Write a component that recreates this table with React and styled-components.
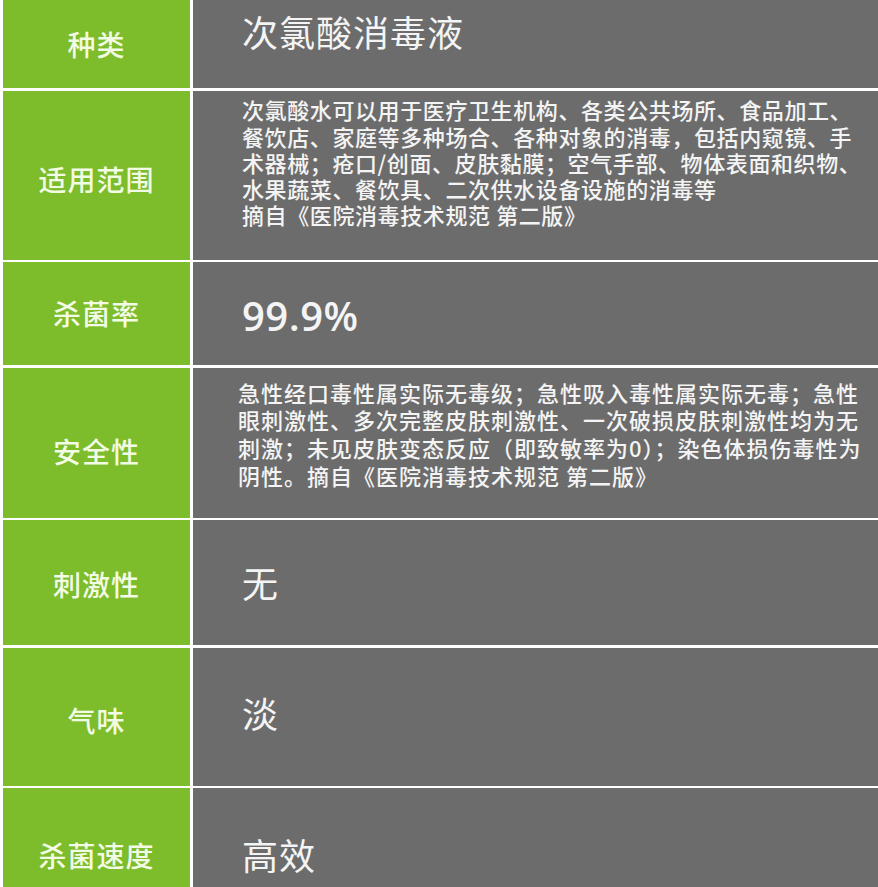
import React from "react";
import styled, { createGlobalStyle } from "styled-components";

const Global = createGlobalStyle`
  html, body {
    margin: 0;
    padding: 0;
    background: #ffffff;
    height: 887px;
    overflow: hidden;
  }
  body {
    font-family: "Noto Sans CJK SC", "Noto Sans", sans-serif;
  }
`;

const Table = styled.div`
  display: grid;
  grid-template-columns: 187px 1fr;
  column-gap: 3px;
  row-gap: 2.5px;
  padding-left: 3px;
`;

const shiftPad = (s) =>
  `padding-top: ${s > 0 ? s * 2 : 0}px; padding-bottom: ${s < 0 ? -s * 2 : 0}px;`;

const LabelCell = styled.div`
  box-sizing: border-box;
  height: ${(p) => p.$h}px;
  background: #7dbc2b;
  color: #f2fbe4;
  display: flex;
  align-items: center;
  justify-content: center;
  font-family: "Noto Sans CJK SC", sans-serif;
  font-size: 28px;
  font-weight: 500;
  line-height: 1;
  letter-spacing: 1px;
  ${(p) => shiftPad(p.$shift)}
`;

const ValueCell = styled.div`
  box-sizing: border-box;
  height: ${(p) => p.$h}px;
  background: #6c6c6c;
  color: #f4f4f4;
  display: flex;
  flex-direction: column;
  justify-content: center;
  align-items: flex-start;
  padding-left: ${(p) => p.$left}px;
  ${(p) => shiftPad(p.$shift)}
`;

const BigValue = styled.div`
  font-family: "Noto Sans CJK SC", sans-serif;
  font-size: 36px;
  font-weight: 400;
  line-height: 1;
  letter-spacing: 1px;
`;

const NumValue = styled.div`
  font-family: "Open Sans", "Noto Sans", sans-serif;
  font-size: 40px;
  font-weight: 600;
  line-height: 1;
  letter-spacing: 0.5px;
`;

const Paragraph = styled.div`
  font-family: "Noto Sans CJK SC", sans-serif;
  font-size: 22px;
  font-weight: 500;
  line-height: ${(p) => p.$pitch}px;
  letter-spacing: ${(p) => p.$spacing}px;
`;

const Line = styled.div`
  white-space: nowrap;
`;

const rows = [
  { label: "种类", h: 88, ls: -0.5, vs: -13, big: "次氯酸消毒液" },
  {
    label: "适用范围",
    h: 169,
    ls: 3.5,
    vs: -13,
    left: 49,
    spacing: 0.6,
    pitch: 26.3,
    lines: [
      "次氯酸水可以用于医疗卫生机构、各类公共场所、食品加工、",
      "餐饮店、家庭等多种场合、各种对象的消毒，包括内窥镜、手",
      "术器械；疮口/创面、皮肤黏膜；空气手部、物体表面和织物、",
      "水果蔬菜、餐饮具、二次供水设备设施的消毒等",
      "摘自《医院消毒技术规范 第二版》",
    ],
  },
  { label: "杀菌率", h: 103, ls: -0.5, vs: 2.5, num: "99.9%" },
  {
    label: "安全性",
    h: 150,
    ls: 8,
    vs: -8.5,
    left: 45,
    spacing: 1,
    pitch: 27.7,
    lines: [
      "急性经口毒性属实际无毒级；急性吸入毒性属实际无毒；急性",
      "眼刺激性、多次完整皮肤刺激性、一次破损皮肤刺激性均为无",
      "刺激；未见皮肤变态反应（即致敏率为0）；染色体损伤毒性为",
      "阴性。摘自《医院消毒技术规范 第二版》",
    ],
  },
  { label: "刺激性", h: 125, ls: 1.5, vs: -1, big: "无" },
  { label: "气味", h: 138, ls: 3.5, vs: -4.5, big: "淡" },
  { label: "杀菌速度", h: 138, ls: -2.5, vs: -3.5, big: "高效" },
];

export default function App() {
  return (
    <>
      <Global />
      <Table>
        {rows.map((r) => (
          <React.Fragment key={r.label}>
            <LabelCell $h={r.h} $shift={r.ls}>
              {r.label}
            </LabelCell>
            <ValueCell $h={r.h} $shift={r.vs} $left={r.left ?? 49}>
              {r.big && <BigValue>{r.big}</BigValue>}
              {r.num && <NumValue>{r.num}</NumValue>}
              {r.lines && (
                <Paragraph $pitch={r.pitch} $spacing={r.spacing}>
                  {r.lines.map((l) => (
                    <Line key={l}>{l}</Line>
                  ))}
                </Paragraph>
              )}
            </ValueCell>
          </React.Fragment>
        ))}
      </Table>
    </>
  );
}
